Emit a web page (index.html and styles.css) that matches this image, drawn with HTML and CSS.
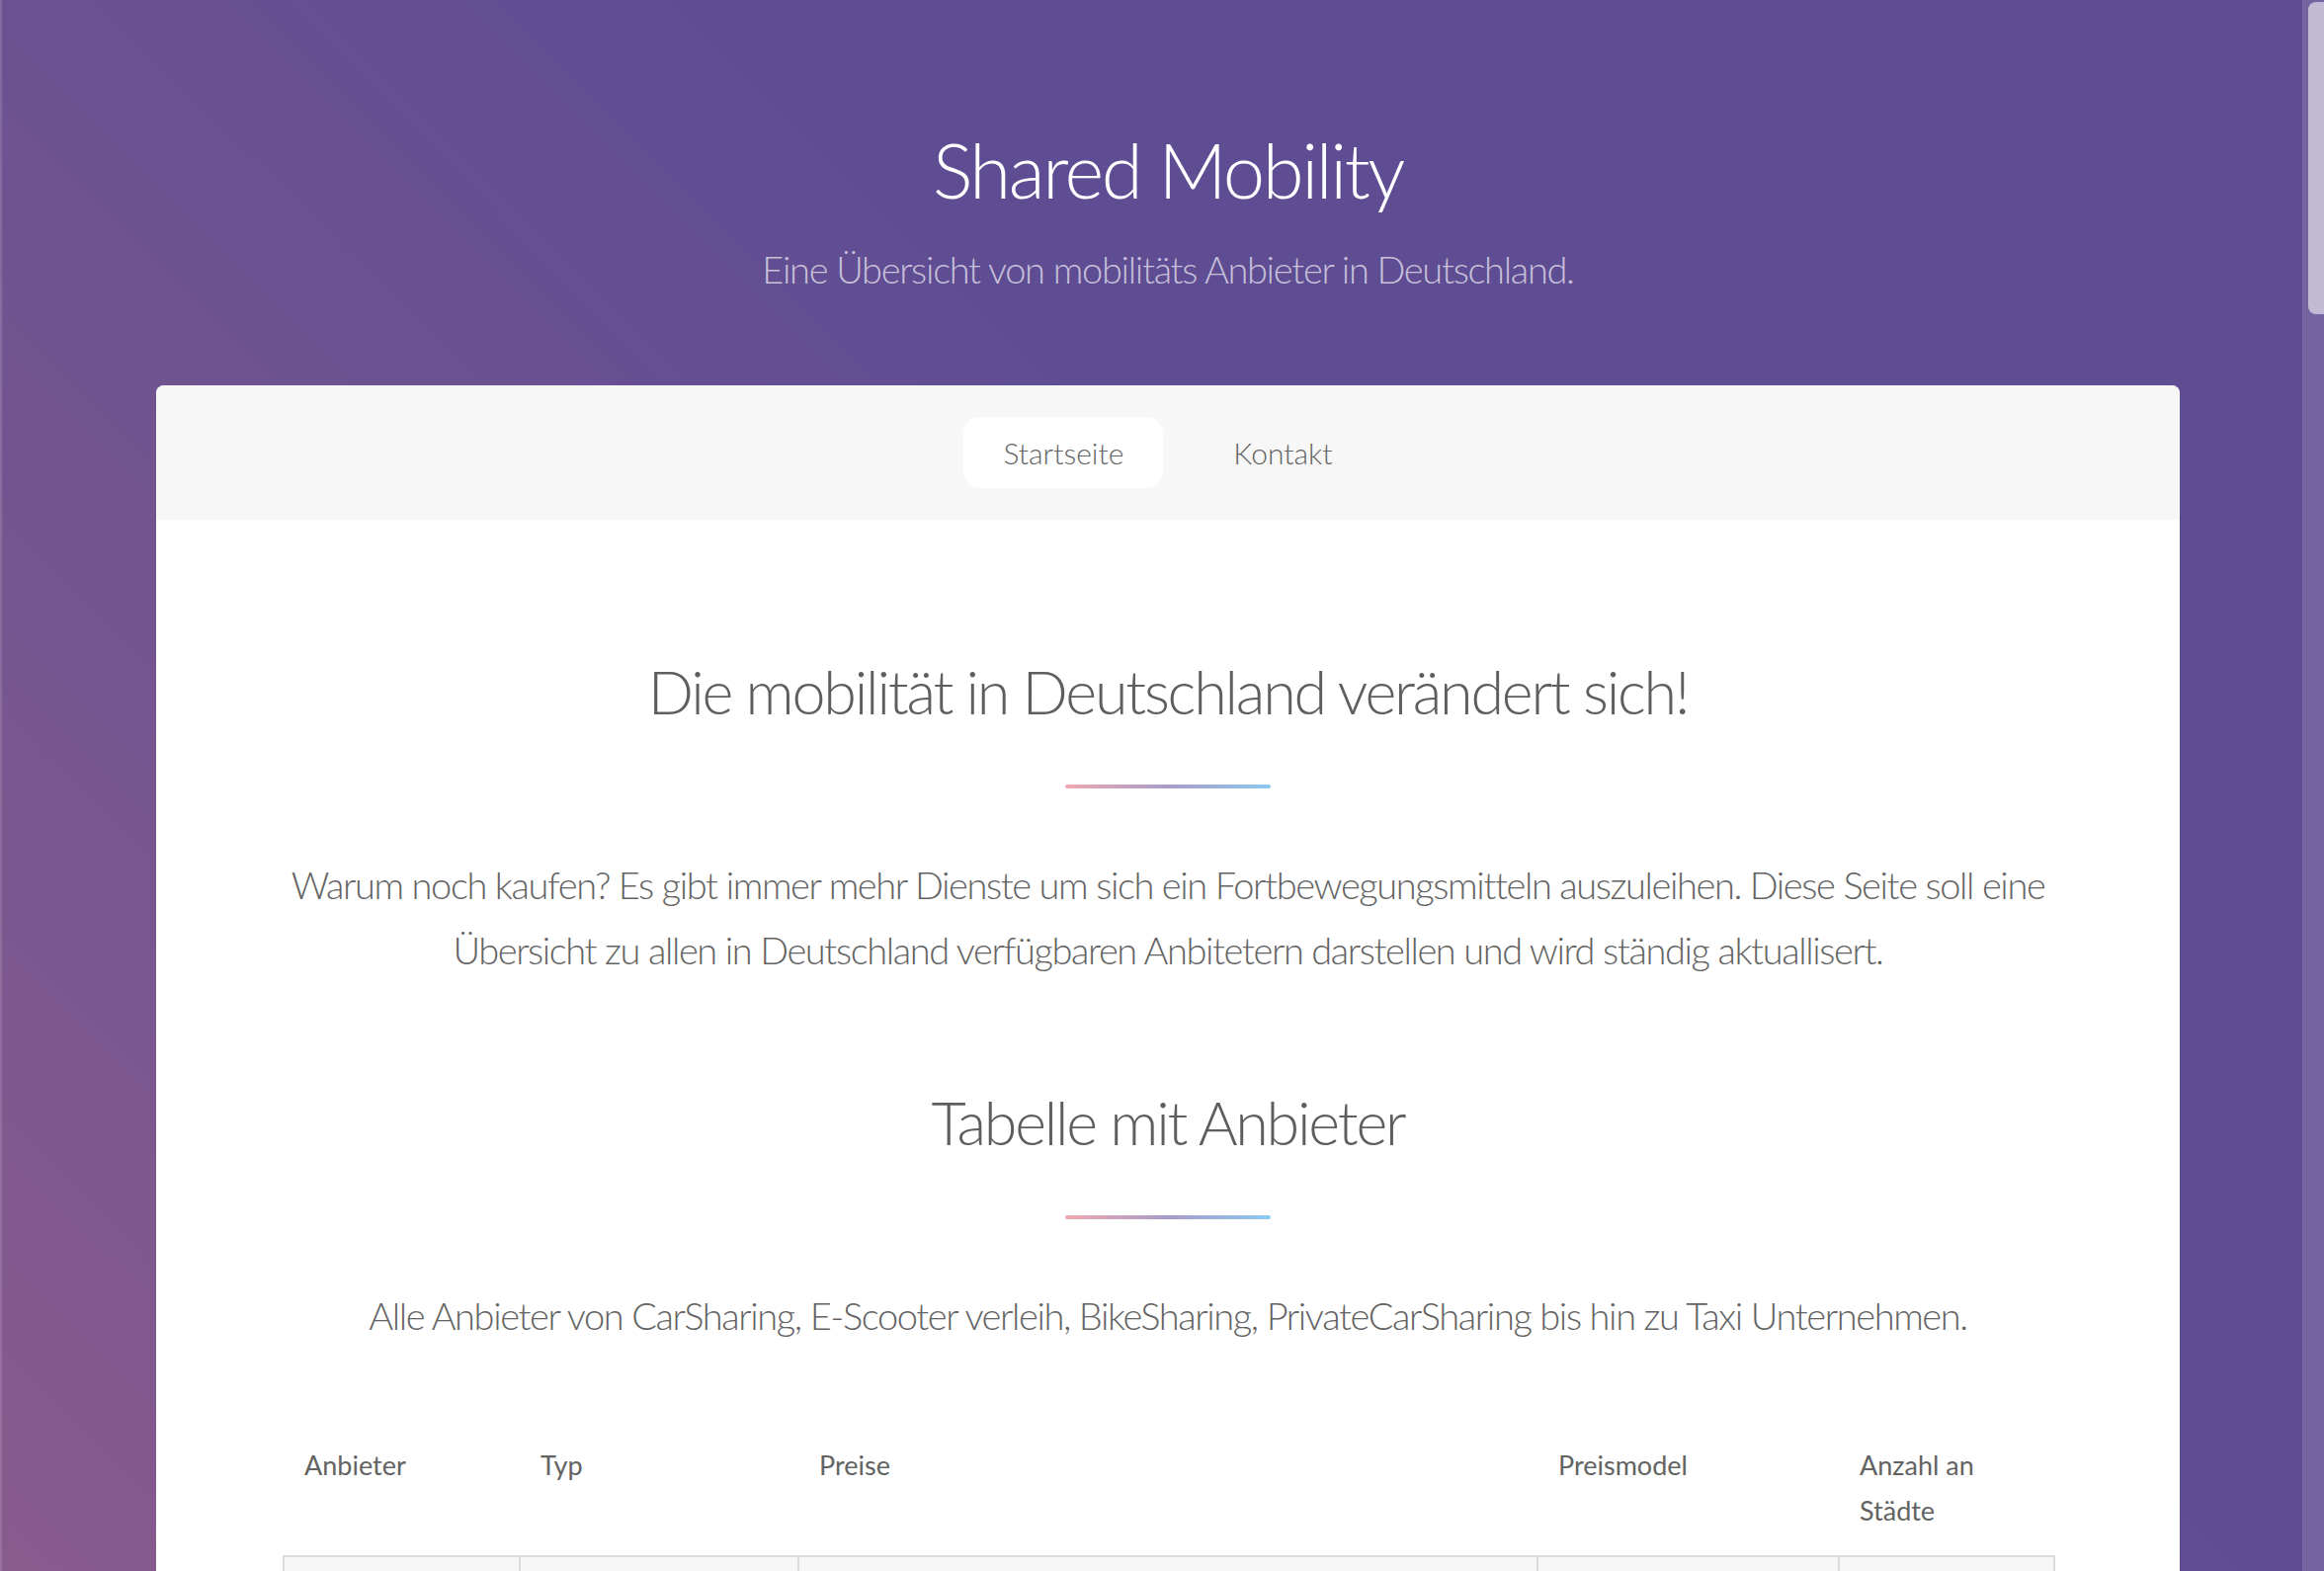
FILE: index.html
```html
<!DOCTYPE html>
<html lang="de">
<head>
<meta charset="utf-8">
<title>Shared Mobility</title>
<link rel="stylesheet" href="styles.css">
</head>
<body>
<div class="wrapper">
  <header class="site-header">
    <h1 class="site-title">Shared Mobility</h1>
    <p class="site-tagline">Eine Übersicht von mobilitäts Anbieter in Deutschland.</p>
  </header>
  <div class="card">
    <nav class="nav">
      <a class="nav-link active" href="#">Startseite</a>
      <a class="nav-link" href="#">Kontakt</a>
    </nav>
    <main class="main">
      <section class="section">
        <header class="major"><h2>Die mobilität in Deutschland verändert sich!</h2></header>
        <p class="lead">Warum noch kaufen? Es gibt immer mehr Dienste um sich ein Fortbewegungsmitteln auszuleihen. Diese Seite soll eine Übersicht zu allen in Deutschland verfügbaren Anbitetern darstellen und wird ständig aktuallisert.</p>
      </section>
      <section class="section">
        <header class="major"><h2>Tabelle mit Anbieter</h2></header>
        <p class="lead">Alle Anbieter von CarSharing, E-Scooter verleih, BikeSharing, PrivateCarSharing bis hin zu Taxi Unternehmen.</p>
        <div class="table-wrapper">
          <table class="providers">
            <colgroup>
              <col class="col-a"><col class="col-b"><col class="col-c"><col class="col-d"><col class="col-e">
            </colgroup>
            <thead>
              <tr><th>Anbieter</th><th>Typ</th><th>Preise</th><th>Preismodel</th><th>Anzahl an Städte</th></tr>
            </thead>
            <tbody>
              <tr><td></td><td></td><td></td><td></td><td></td></tr>
              <tr><td></td><td></td><td></td><td></td><td></td></tr>
              <tr><td></td><td></td><td></td><td></td><td></td></tr>
            </tbody>
          </table>
        </div>
      </section>
    </main>
  </div>
</div>
<div class="scrollbar"><div class="scrollbar-thumb"></div></div>
</body>
</html>
```
FILE: styles.css
```css
html {
  height: 100%;
  overflow: hidden;
  background: #5f4d93 linear-gradient(45deg, #885b8d 0%, #5f4d93 58%) fixed;
}

body {
  margin: 0;
  padding: 0 0 0 12px;
  font-family: Lato, "Open Sans", sans-serif;
  font-weight: 300;
  color: #636363;
}

body::before {
  content: "";
  position: fixed;
  top: 0;
  left: 0;
  width: 2px;
  height: 100%;
  background: rgba(255, 255, 255, 0.14);
}

.wrapper {
  width: 2048px;
  margin: 0 auto;
}

.site-header {
  padding: 122px 0 88px;
  text-align: center;
  color: #ffffff;
}

.site-title {
  margin: 0 0 20px;
  font-size: 76px;
  line-height: 100px;
  font-weight: 300;
  letter-spacing: -2.4px;
}

.site-tagline {
  margin: 0;
  font-size: 38px;
  line-height: 60px;
  letter-spacing: -1.3px;
  color: rgba(255, 255, 255, 0.66);
}

.card {
  background: #ffffff;
  border-radius: 8px 8px 0 0;
  overflow: hidden;
}

.nav {
  background: #f7f7f7;
  display: flex;
  justify-content: center;
  gap: 31px;
  padding: 32px 0;
}

.nav-link {
  display: block;
  height: 72px;
  line-height: 72px;
  padding: 0 40px;
  border-radius: 16px;
  font-size: 30px;
  color: #636363;
  text-decoration: none;
}

.nav-link.active {
  background: #ffffff;
}

.main {
  padding: 128px 128px 64px;
  text-align: center;
}

.major {
  margin-bottom: 64px;
}

.major h2 {
  margin: 0;
  font-size: 61px;
  line-height: 92px;
  font-weight: 300;
  letter-spacing: -2.2px;
  color: #5e5e5e;
}

.major::after {
  content: "";
  display: block;
  width: 208px;
  height: 4px;
  margin: 48px auto 0;
  border-radius: 2px;
  background: linear-gradient(90deg, #efa8b0, #a89cc8, #8cc9f0);
}

.lead {
  margin: 0 0 96px;
  font-size: 38px;
  line-height: 66px;
  letter-spacing: -1.4px;
}

.providers {
  width: 100%;
  border-collapse: collapse;
  table-layout: fixed;
  text-align: left;
}

.col-a { width: 239px; }
.col-b { width: 282px; }
.col-c { width: 748px; }
.col-d { width: 305px; }
.col-e { width: 218px; }

.providers th {
  padding: 0 21px 22px;
  font-size: 27px;
  line-height: 46px;
  font-weight: 400;
  color: #636363;
  vertical-align: top;
}

.providers td {
  height: 96px;
  padding: 0;
  border: 2px solid #dbdbdb;
}

.providers tbody tr:nth-child(odd) {
  background: #f6f6f6;
}

.scrollbar {
  position: fixed;
  top: 0;
  right: 0;
  width: 21px;
  height: 100%;
  background: rgba(255, 255, 255, 0.13);
  border-left: 1px solid rgba(255, 255, 255, 0.07);
}

.scrollbar-thumb {
  margin: 2px 0 0 5px;
  height: 316px;
  border-radius: 8px 0 0 8px;
  background: rgba(255, 255, 255, 0.56);
}
```
